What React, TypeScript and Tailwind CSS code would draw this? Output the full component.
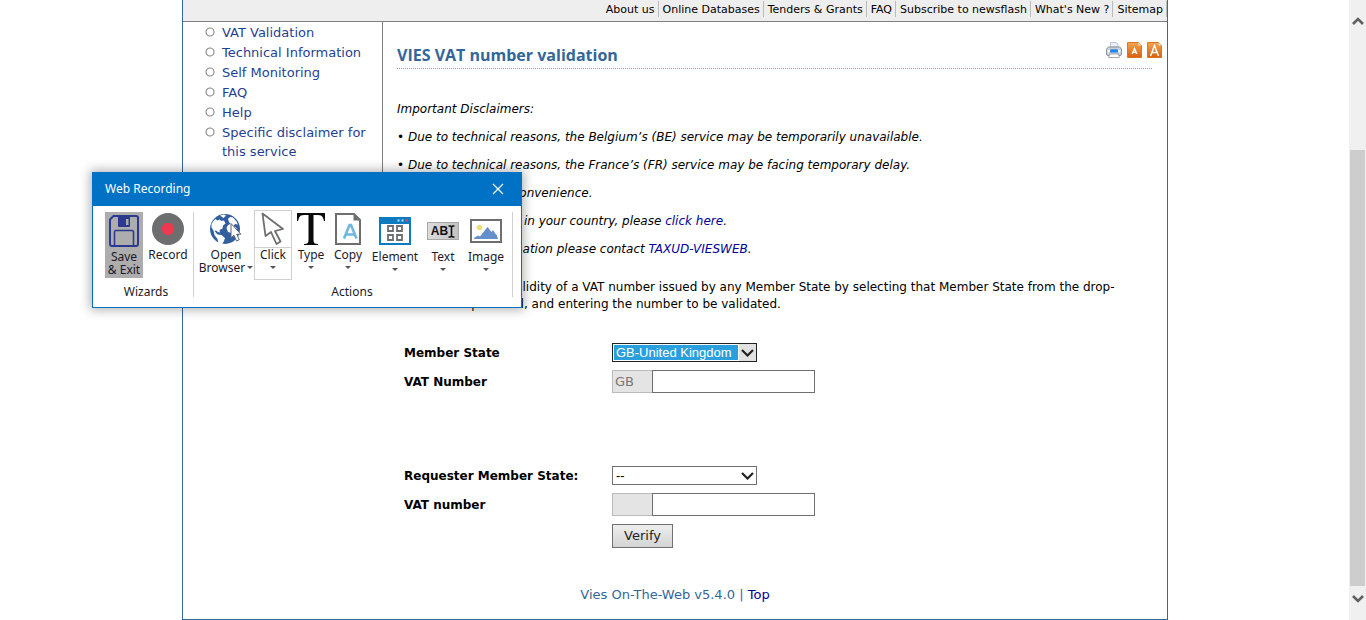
import React from "react";

const navLinks = [
  "About us",
  "Online Databases",
  "Tenders & Grants",
  "FAQ",
  "Subscribe to newsflash",
  "What's New ?",
  "Sitemap",
];

const sideLinks = [
  "VAT Validation",
  "Technical Information",
  "Self Monitoring",
  "FAQ",
  "Help",
  "Specific disclaimer for this service",
];

function Chevron() {
  return (
    <svg width="13" height="8" viewBox="0 0 13 8" fill="none" stroke="#222" strokeWidth="2.2" aria-hidden="true">
      <path d="M1 1l5.5 5.5L12 1" />
    </svg>
  );
}

function PrintIcon() {
  return (
    <svg width="16" height="16" viewBox="0 0 16 16" aria-hidden="true">
      <path d="M4.500 5V.5h6l1.500 1.500v3z" fill="#eaf1fc" stroke="#a9b6cc" strokeWidth=".8" />
      <path d="M2.500 5h11q2 1 2 3v4q0 1.500-1.500 1.500H2Q.5 13.500.5 12V8q0-2 2-3z" fill="#cdd0d7" stroke="#858a94" strokeWidth=".9" />
      <path d="M1.500 8h2.500v2.500H1.500zM12 8h2.500v2.500H12z" fill="#f8f8fa" />
      <path d="M4.500 7.200h7l.8 3.300H3.700z" fill="#1f86ee" />
      <path d="M3.500 12h9l.8 3.500H2.700z" fill="#fff" stroke="#8d929b" strokeWidth=".8" />
    </svg>
  );
}

function FontSizeIcon({ large }: { large?: boolean }) {
  return (
    <svg width="15" height="16" viewBox="0 0 15 16" aria-hidden="true">
      <defs>
        <linearGradient id={large ? "fsl" : "fss"} x1="0" y1="0" x2="0" y2="1">
          <stop offset="0" stopColor="#f3a64c" />
          <stop offset="1" stopColor="#d85f12" />
        </linearGradient>
      </defs>
      <path d="M.5.5h11l3 3v12H.5z" fill={large ? "url(#fsl)" : "url(#fss)"} stroke="#dd741f" />
      <path d="M11.500.5v3h3z" fill="#fbe3c6" />
      {large ? (
        <path d="M3.500 14L7.500 3.500l4 10.500M5 10.500h5" stroke="#fff" strokeWidth="1.500" fill="none" />
      ) : (
        <path d="M5.200 12l2.300-5.500L9.800 12M6 10.400h3" stroke="#fff" strokeWidth="1.400" fill="none" />
      )}
    </svg>
  );
}

function SaveIcon() {
  return (
    <svg width="30" height="32" viewBox="0 0 30 32" fill="none" stroke="#2b3990" aria-hidden="true">
      <path d="M1 4.500L4.500 1H27q2 0 2 2v26q0 2-2 2H3q-2 0-2-2z" strokeWidth="2" />
      <path d="M9 2h12v9q0 1-1 1H10q-1 0-1-1z" fill="#2b3990" stroke="none" />
      <path d="M17 4h2.500v6H17z" fill="#adadad" stroke="none" />
      <path d="M5.500 31V17q0-1.500 1.500-1.500h16q1.500 0 1.500 1.500v14" strokeWidth="1.500" />
    </svg>
  );
}

function RecordIcon() {
  return (
    <svg width="32" height="32" viewBox="0 0 32 32" aria-hidden="true">
      <circle cx="16" cy="16" r="16" fill="#6d6e70" />
      <circle cx="16" cy="16" r="6.200" fill="#ee3a50" />
    </svg>
  );
}

function GlobeIcon() {
  return (
    <svg width="34" height="32" viewBox="0 0 34 32" aria-hidden="true">
      <circle cx="16" cy="16" r="15" fill="#345f9e" />
      <path
        d="M2.500 11q1.500-3 4-5l2 1.500 2.500-1 1 1.500 3-.5 1.500 3-2.500 2-.5 3-3 1.500.5 2.500-2-.5-2-1.500-1.500.5 3 3.500 4 .5 3.500 3-1 3-2 3.500-3.500-1.500-1-4-3-4-1-4.500-2-3z"
        fill="#fff"
      />
      <path d="M11 2.500l4-1 2 1-2.500 2.500zM19 6l2-2 3 .5 3.500 4 1.500 3-3-.5-1.500 2 3 2 .5 4-3 5-2.500-4-3.500-1-1.500-4 1.500-3 2.500-1-1.500-2z" fill="#fff" />
      <path d="M22 10.500v14.300l3-2.600 2.500 5.800 2.800-1.300-2.600-5.500h4.200z" fill="#fff" stroke="#5b6472" strokeWidth="1" />
    </svg>
  );
}

function CursorIcon() {
  return (
    <svg width="24" height="34" viewBox="0 0 24 34" fill="none" stroke="#6d6e70" strokeWidth="1.800" strokeLinejoin="round" aria-hidden="true">
      <path d="M1.500 1.500l3 22.500 5.500-4 5.500 12 4-2.500-5.500-10.500 8-2z" />
    </svg>
  );
}

function TypeIcon() {
  return (
    <svg width="28" height="32" viewBox="0 0 28 32" aria-hidden="true">
      <path
        d="M0 0h28l.3 8h-1.300q-.8-4-2.500-5.200-1.200-.8-4-.8H16.500v25q0 2.500 1 3.200.8.600 3.500.7V32H7v-1.100q2.700-.1 3.500-.7 1-.7 1-3.200V2H7.500q-2.800 0-4 .8Q1.800 4 1 8H-.3z"
        fill="#0a0a0a"
      />
    </svg>
  );
}

function CopyIcon() {
  return (
    <svg width="26" height="32" viewBox="0 0 26 32" fill="none" aria-hidden="true">
      <path d="M1 1h18l6 6v24H1z" stroke="#6d6e70" strokeWidth="2" />
      <path d="M18.500 1v6.500H25z" fill="#6d6e70" />
      <path d="M9 25.500L14.500 12h1.500L21.500 25.500M11 21.500h8.500" stroke="#6fb8e2" strokeWidth="2.600" />
    </svg>
  );
}

function ElementIcon() {
  return (
    <svg width="32" height="28" viewBox="0 0 32 28" fill="none" aria-hidden="true">
      <path d="M1 1h30v26H1z" fill="#fff" stroke="#0c7bbf" strokeWidth="2" />
      <path d="M0 0h32v7H0z" fill="#0c7bbf" />
      <path d="M18.500 2.500h2v2h-2zM22.500 2.500h2v2h-2z" fill="#bfe0f5" />
      <path d="M26.500 2.500h2.500v2h-2.500z" fill="#f0405a" />
      <path d="M9 9h5v5H9zM18 9h5v5h-5zM9 18h5v5H9zM18 18h5v5h-5z" stroke="#6d6e70" strokeWidth="1.800" />
    </svg>
  );
}

function TextIcon() {
  return (
    <span className="flex h-[18px] w-8 items-center justify-center border border-[#a8a8a8] bg-linear-to-r from-[#dcdcdc] to-[#c2c2c2] font-['Liberation_Sans',sans-serif] text-[12px] font-bold text-[#111]">
      AB
      <svg width="7" height="13" viewBox="0 0 7 13" fill="none" stroke="#111" strokeWidth="1.600" aria-hidden="true">
        <path d="M.5 1h2l1 1 1-1h2M.5 12h2l1-1 1 1h2M3.500 2v9" />
      </svg>
    </span>
  );
}

function ImageIcon() {
  return (
    <svg width="32" height="24" viewBox="0 0 32 24" aria-hidden="true">
      <path d="M1 1h30v22H1z" fill="#fff" stroke="#6d6e70" strokeWidth="2" />
      <circle cx="9.500" cy="8.500" r="2.800" fill="#eedc7e" />
      <path d="M4 20v-1l4-2.500 2 1L17.500 8l4 5 1.500-2 2.500 4 1 .5 1.500 4.500z" fill="#648fcb" />
    </svg>
  );
}

function Caret() {
  return (
    <svg width="6" height="3" viewBox="0 0 6 3" aria-hidden="true" className="shrink-0">
      <path d="M0 0h6L3 3z" fill="#555" />
    </svg>
  );
}

function Tool({ icon, label, width, tall }: { icon: React.ReactNode; label: string; width: string; tall?: boolean }) {
  return (
    <button type="button" className={`flex flex-col items-center pt-[3px] ${width}`}>
      <span className={`flex items-center justify-center ${tall ? "h-9" : "h-8"}`}>{icon}</span>
      <span className={tall ? "mt-px" : "mt-[3px]"}>{label}</span>
      <span className="mt-[5px]">
        <Caret />
      </span>
    </button>
  );
}

function RecorderWindow() {
  return (
    <div
      role="dialog"
      aria-label="Web Recording"
      className="absolute top-[172px] left-[92px] w-[430px] border border-[#0072c6] bg-white font-['Noto_Sans',sans-serif] text-[12px] leading-[13px] text-[#1a1a2a] shadow-[0_0_10px_2px_rgba(0,0,0,0.3)]"
    >
      <div className="flex h-[33px] items-center justify-between bg-[#0072c6] pr-[17px] pb-[2px] pl-3 text-white">
        <h2>Web Recording</h2>
        <button type="button" aria-label="Close">
          <svg width="12" height="12" viewBox="0 0 12 12" stroke="#fff" strokeWidth="1.200" aria-hidden="true">
            <path d="M1 1l10 10M11 1L1 11" />
          </svg>
        </button>
      </div>
      <div className="flex pt-1 pb-[9px]">
        <div className="flex flex-col pr-[6px] pl-3">
          <div className="flex h-[70px] items-start gap-[6px]">
            <button type="button" className="mt-[2px] flex h-[66px] w-[38px] flex-col items-center bg-[#adadad] pt-[3px]">
              <SaveIcon />
              <span className="mt-[3px]">
                Save
                <br />
                &amp; Exit
              </span>
            </button>
            <button type="button" className="flex w-[38px] flex-col items-center pt-[3px]">
              <RecordIcon />
              <span className="mt-[3px]">Record</span>
            </button>
          </div>
          <p className="mt-[5px] text-center">Wizards</p>
        </div>
        <div className="mt-[2px] h-[85px] w-px bg-[#d0d0d0]" />
        <div className="flex flex-col">
          <div className="flex h-[70px] items-start pl-[6px]">
            <button type="button" className="mr-[2px] flex w-[52px] flex-col items-center pt-[3px]">
              <GlobeIcon />
              <span className="mt-[3px]">Open</span>
              <span className="flex items-center gap-[2px]">
                Browser
                <Caret />
              </span>
            </button>
            <button type="button" className="flex h-[70px] w-[38px] flex-col items-center border border-[#d0d0d0]">
              <span className="flex h-[37px] w-full items-center justify-center border-b border-[#d0d0d0]">
                <CursorIcon />
              </span>
              <span>Click</span>
              <span className="mt-[5px]">
                <Caret />
              </span>
            </button>
            <Tool icon={<TypeIcon />} label="Type" width="w-[38px]" />
            <Tool icon={<CopyIcon />} label="Copy" width="w-9" />
            <Tool icon={<ElementIcon />} label="Element" width="w-[58px]" tall />
            <Tool icon={<TextIcon />} label="Text" width="w-[38px]" tall />
            <Tool icon={<ImageIcon />} label="Image" width="w-12" tall />
          </div>
          <p className="mt-[5px] text-center">Actions</p>
        </div>
        <div className="mt-[2px] ml-[2px] h-[85px] w-px bg-[#d0d0d0]" />
      </div>
    </div>
  );
}

function VatInput({ id, label, code }: { id: string; label: string; code: string }) {
  return (
    <div className="flex h-[29px] items-center">
      <label htmlFor={id} className="w-[208px] font-bold">
        {label}
      </label>
      <input
        aria-label={`${label} country code`}
        disabled
        value={code}
        className="h-[23px] w-10 border border-r-0 border-[#bababa] bg-[#e4e4e4] px-[2px] text-[13px] text-[#777]"
      />
      <input id={id} type="text" className="h-[23px] w-[163px] border border-[#6f6f6f] bg-white px-[2px] text-[13px]" />
    </div>
  );
}

export default function App() {
  return (
    <div className="relative flex min-h-screen bg-white font-['DejaVu_Sans',Verdana,sans-serif] text-[12px] text-black">
      <div className="flex flex-1 justify-center pl-px">
        <div className="flex w-full max-w-[986px] flex-col border-x border-b border-[#33699c]">
          <nav className="flex h-[22px] justify-end border-b border-[#808080] bg-[#eee] pt-px pb-[4px] text-[11px] leading-[17px]">
            {navLinks.map((t) => (
              <a key={t} href="#" className="border-r border-[#bbb] pr-[3px] pl-1">
                {t}
              </a>
            ))}
          </nav>
          <div className="flex items-start">
            <aside className="min-h-[200px] w-[200px] shrink-0 border-r border-[#808080] pr-2 pl-[22px]">
              <ul className="text-[13px] leading-[19px] text-[#1f3f95]">
                {sideLinks.map((t) => (
                  <li key={t} className="mt-px flex items-start gap-[7px]">
                    <svg width="10" height="10" viewBox="0 0 10 10" className="mt-[4px] shrink-0" aria-hidden="true">
                      <circle cx="5" cy="5" r="4" fill="#fff" stroke="#8c8c8c" strokeWidth="1.200" />
                    </svg>
                    <a href="#">{t}</a>
                  </li>
                ))}
              </ul>
            </aside>
            <main className="flex-1 pt-5 pr-[5px] pl-[14px]">
              <div className="flex h-[26px] items-start justify-between">
                <h1 className="pt-px font-['Open_Sans',sans-serif] text-[16px] leading-6 font-bold text-[#336699]">
                  VIES VAT number validation
                </h1>
                <div className="flex gap-[5px]">
                  <button type="button" aria-label="Print">
                    <PrintIcon />
                  </button>
                  <button type="button" aria-label="Decrease text size">
                    <FontSizeIcon />
                  </button>
                  <button type="button" aria-label="Increase text size">
                    <FontSizeIcon large />
                  </button>
                </div>
              </div>
              <div className="mr-[10px] border-b border-dotted border-[#7ba4cc]" />
              <div className="mt-[26px] leading-7 italic">
                <p>Important Disclaimers:</p>
                <p>• Due to technical reasons, the Belgium’s (BE) service may be temporarily unavailable.</p>
                <p>• Due to technical reasons, the France’s (FR) service may be facing temporary delay.</p>
                <p>We apologise for inconvenience.</p>
                <p>
                  For enquiries on VAT in your country, please{" "}
                  <a href="#" className="text-[#000099]">
                    click here
                  </a>
                  .
                </p>
                <p>
                  For additional information please contact{" "}
                  <a href="#" className="text-[#000099]">
                    TAXUD-VIESWEB
                  </a>
                  .
                </p>
              </div>
              <p className="mt-4 max-w-[740px] leading-[17px]">
                You can verify the validity of a VAT number issued by any Member State by selecting that Member State from the drop-down menu provided, and entering the number to be validated.
              </p>
              <form className="mt-[25px] pl-[7px]">
                <div className="flex h-[29px] items-center">
                  <label htmlFor="state" className="w-[208px] font-bold">
                    Member State
                  </label>
                  <div className="flex h-[19px] w-[145px] border border-[#222] bg-white">
                    <select
                      id="state"
                      className="m-px w-[124px] appearance-none bg-[#2a9fdd] px-[2px] font-['Liberation_Sans',sans-serif] text-[13px] leading-[15px] text-white"
                    >
                      <option>GB-United Kingdom</option>
                    </select>
                    <span className="flex flex-1 items-center justify-center bg-[#e1e1e1]">
                      <Chevron />
                    </span>
                  </div>
                </div>
                <VatInput id="vat" label="VAT Number" code="GB" />
                <div className="mt-[65px] flex h-[29px] items-center">
                  <label htmlFor="rstate" className="w-[208px] font-bold">
                    Requester Member State:
                  </label>
                  <div className="flex h-[19px] w-[145px] border border-[#6f6f6f] bg-white">
                    <select
                      id="rstate"
                      className="m-px w-[124px] appearance-none px-[2px] font-['Liberation_Sans',sans-serif] text-[13px] leading-[15px] text-black"
                    >
                      <option>--</option>
                    </select>
                    <span className="flex flex-1 items-center justify-center">
                      <Chevron />
                    </span>
                  </div>
                </div>
                <VatInput id="rvat" label="VAT number" code="" />
                <button
                  type="button"
                  className="mt-[5px] ml-[208px] block h-6 w-[61px] border border-[#707070] bg-linear-to-b from-[#eee] to-[#d4d4d4] text-[13px] text-[#222]"
                >
                  Verify
                </button>
              </form>
            </main>
          </div>
          <footer className="mt-[39px] pb-4 text-center text-[13px] leading-4 text-[#336699]">
            Vies On-The-Web v5.4.0 |{" "}
            <a href="#" className="text-[#000099]">
              Top
            </a>
          </footer>
        </div>
      </div>
      <div className="flex w-[17px] flex-col items-center bg-[#f0f0f0] pt-4 pb-4 text-[#606060]" aria-hidden="true">
        <svg width="12" height="10" viewBox="0 0 12 10" fill="none" stroke="currentColor" strokeWidth="2.600">
          <path d="M1 8l5-5 5 5" />
        </svg>
        <div className="mt-[124px] w-[15px] flex-1 bg-[#cdcdcd]" />
        <svg width="12" height="10" viewBox="0 0 12 10" fill="none" stroke="currentColor" strokeWidth="2.600" className="mt-2">
          <path d="M1 2l5 5 5-5" />
        </svg>
      </div>
      <RecorderWindow />
    </div>
  );
}
